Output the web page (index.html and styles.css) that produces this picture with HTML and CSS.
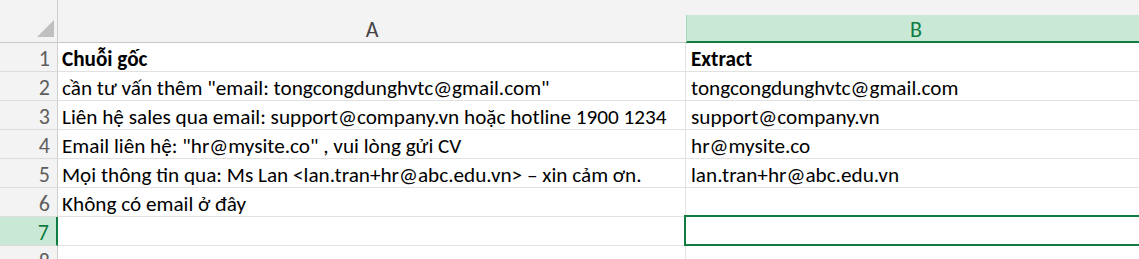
FILE: index.html
```html
<!DOCTYPE html>
<html lang="vi">
<head>
<meta charset="utf-8">
<title>Sheet1</title>
<link rel="stylesheet" href="styles.css">
</head>
<body>
<div class="sheet">
  <div class="corner">
    <svg class="select-all" width="17" height="17" viewBox="0 0 17 17"><polygon points="17,0 17,17 0,17" fill="#bfbfbf"/></svg>
  </div>
  <div class="col-head"><div class="col-label">A</div></div>
  <div class="col-head active"><div class="col-label">B</div></div>

  <div class="row-head">1</div>
  <div class="cell bold">Chuỗi gốc</div>
  <div class="cell b bold">Extract</div>

  <div class="row-head">2</div>
  <div class="cell">cần tư vấn thêm "email: tongcongdunghvtc@gmail.com"</div>
  <div class="cell b">tongcongdunghvtc@gmail.com</div>

  <div class="row-head">3</div>
  <div class="cell">Liên hệ sales qua email: support@company.vn hoặc hotline 1900 1234</div>
  <div class="cell b">support@company.vn</div>

  <div class="row-head">4</div>
  <div class="cell">Email liên hệ: "hr@mysite.co" , vui lòng gửi CV</div>
  <div class="cell b">hr@mysite.co</div>

  <div class="row-head">5</div>
  <div class="cell">Mọi thông tin qua: Ms Lan &lt;lan.tran+hr@abc.edu.vn&gt; – xin cảm ơn.</div>
  <div class="cell b">lan.tran+hr@abc.edu.vn</div>

  <div class="row-head">6</div>
  <div class="cell">Không có email ở đây</div>
  <div class="cell b"></div>

  <div class="row-head active">7</div>
  <div class="cell"></div>
  <div class="cell b"></div>

  <div class="row-head">8</div>
  <div class="cell"></div>
  <div class="cell b"></div>

  <div class="selection"></div>
</div>
</body>
</html>
```
FILE: styles.css
```css
html, body {
  margin: 0;
  background: #ffffff;
  overflow: hidden;
}

.sheet {
  position: relative;
  display: grid;
  grid-template-columns: 58px 628px 459px;
  grid-template-rows: 43px repeat(8, 29px);
  font-family: "Carlito", "Liberation Sans", sans-serif;
  color: #000;
}

.sheet > div {
  box-sizing: border-box;
}

/* top-left select-all box */
.corner {
  background: #f3f3f3;
  border-right: 1px solid #cfcfcf;
  border-bottom: 1px solid #c8c8c8;
  display: flex;
  justify-content: flex-end;
  align-items: flex-end;
  padding: 0 3px 5px 0;
}

/* column letters */
.col-head {
  background: #f3f3f3;
  border-bottom: 1px solid #c8c8c8;
  padding-top: 15px;
}

.col-label {
  box-sizing: border-box;
  height: 27px;
  padding-top: 2px;
  line-height: 25px;
  font-size: 22px;
  text-align: center;
  color: #444;
}

.col-head.active {
  border-bottom-color: #107c41;
}

.col-head.active .col-label {
  background: #c9e9d6;
  border-left: 1px solid #a6d9bb;
  box-shadow: inset 0 -1px 0 #107c41;
  color: #107c41;
}

/* row numbers */
.row-head {
  background: #f3f3f3;
  border-right: 1px solid #cfcfcf;
  border-bottom: 1px solid #dcdcdc;
  text-align: right;
  padding: 5px 7px 0 0;
  font-size: 22px;
  line-height: 22px;
  color: #5f5f5f;
}

.row-head.active {
  background: #c9e9d6;
  border-right: 2px solid #107c41;
  color: #107c41;
}

/* data cells */
.cell {
  border-right: 1px solid #e1e1e1;
  border-bottom: 1px solid #e1e1e1;
  padding: 6px 0 0 4px;
  font-size: 21.2px;
  line-height: 21px;
  white-space: nowrap;
  overflow: hidden;
}

.cell.b {
  padding-left: 5px;
}

.bold {
  font-weight: bold;
}

/* active cell outline on B7 */
.selection {
  position: absolute;
  left: 684px;
  top: 215px;
  width: 470px;
  height: 31px;
  border: 2px solid #107c41;
}
```
